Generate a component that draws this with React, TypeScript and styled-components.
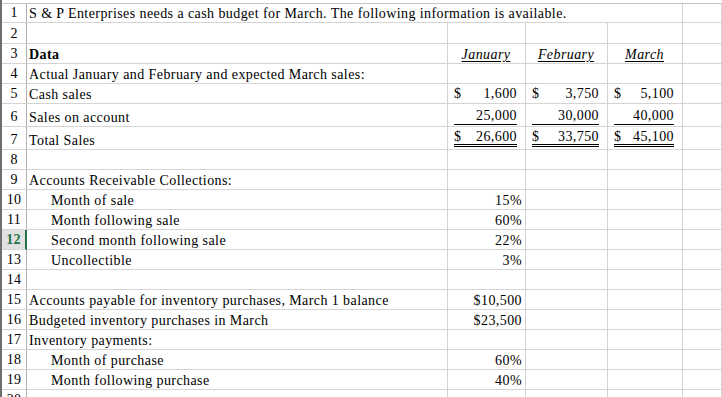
import React from 'react';
import styled, { createGlobalStyle, css } from 'styled-components';

const GlobalStyle = createGlobalStyle`
  html, body { margin: 0; padding: 0; background: #ffffff; }
  body {
    font-family: "Liberation Serif", "Times New Roman", serif;
    color: #000000;
    overflow: hidden;
  }
`;

const COLS = '25px 421px 78px 82px 75px 1fr';
const GRID = '#d4d4d4';

const Sheet = styled.div`
  width: 722px;
  height: 397px;
  overflow: hidden;
  box-sizing: border-box;
  padding-top: 3px;
  border-left: 2px solid #6f6f6f;
`;

const Grid = styled.div`
  border-top: 1px solid #c4c4c4;
`;

const Row = styled.div<{ $h: number }>`
  display: grid;
  grid-template-columns: ${COLS};
  height: ${(p) => p.$h}px;
`;

const RowHeader = styled.div<{ $active?: boolean }>`
  box-sizing: border-box;
  display: flex;
  align-items: flex-end;
  justify-content: center;
  border-right: 1px solid #b0b0b0;
  border-bottom: 1px solid ${GRID};
  font-size: 14px;
  letter-spacing: 0.2px;
  line-height: 17px;
  padding-bottom: 1px;
  color: #000;
  ${(p) =>
    p.$active &&
    css`
      background: #e1e1e1;
      color: #217346;
      font-weight: bold;
      border-right: 2px solid #217346;
    `}
`;

type Align = 'left' | 'right' | 'center';

const Cell = styled.div<{ $align?: Align; $indent?: boolean; $span?: number; $bold?: boolean }>`
  box-sizing: border-box;
  display: flex;
  align-items: flex-end;
  justify-content: ${(p) =>
    p.$align === 'right' ? 'flex-end' : p.$align === 'center' ? 'center' : 'flex-start'};
  grid-column: span ${(p) => p.$span ?? 1};
  border-right: 1px solid ${GRID};
  border-bottom: 1px solid ${GRID};
  padding: 0 3px 0 ${(p) => (p.$indent ? 24 : 2)}px;
  font-size: 14px;
  letter-spacing: 0.42px;
  line-height: 17px;
  font-weight: ${(p) => (p.$bold ? 'bold' : 'normal')};
  white-space: nowrap;
  min-width: 0;
`;

const MoneyCell = styled.div`
  box-sizing: border-box;
  display: flex;
  align-items: flex-end;
  border-right: 1px solid ${GRID};
  border-bottom: 1px solid ${GRID};
  padding: 0 8px 1px 6px;
  font-size: 14px;
  letter-spacing: 0.42px;
  white-space: nowrap;
`;

type Rule = 'none' | 'single' | 'double';

const Money = styled.span<{ $rule: Rule }>`
  flex: 1;
  display: flex;
  justify-content: space-between;
  line-height: ${(p) => (p.$rule === 'double' ? 15 : 16)}px;
  ${(p) =>
    p.$rule === 'single' &&
    css`
      border-bottom: 1px solid #000;
    `}
  ${(p) =>
    p.$rule === 'double' &&
    css`
      border-bottom: 3px double #000;
      margin-bottom: 1px;
    `}
`;

const MonthLabel = styled.span`
  font-style: italic;
  text-decoration: underline;
  text-underline-offset: 2px;
`;

type CellSpec =
  | { kind: 'text'; text?: string; align?: Align; indent?: boolean; span?: number; bold?: boolean; month?: boolean }
  | { kind: 'money'; dollar?: boolean; value: string; rule: Rule };

interface RowSpec {
  n: number;
  h: number;
  cells: CellSpec[];
  active?: boolean;
}

const t = (text?: string, opts: Partial<Extract<CellSpec, { kind: 'text' }>> = {}): CellSpec => ({
  kind: 'text',
  text,
  ...opts,
});
const blank = (): CellSpec => ({ kind: 'text' });
const m = (value: string, rule: Rule, dollar = false): CellSpec => ({ kind: 'money', value, rule, dollar });

const rows: RowSpec[] = [
  {
    n: 1,
    h: 19,
    cells: [
      t('S & P Enterprises needs a cash budget for March. The following information is available.', { span: 4 }),
      blank(),
    ],
  },
  { n: 2, h: 21, cells: [blank(), blank(), blank(), blank(), blank()] },
  {
    n: 3,
    h: 20,
    cells: [
      t('Data', { bold: true }),
      t('January', { align: 'center', month: true }),
      t('February', { align: 'center', month: true }),
      t('March', { align: 'center', month: true }),
      blank(),
    ],
  },
  { n: 4, h: 20, cells: [t('Actual January and February and expected March sales:'), blank(), blank(), blank(), blank()] },
  {
    n: 5,
    h: 20,
    cells: [t('Cash sales'), m('1,600', 'none', true), m('3,750', 'none', true), m('5,100', 'none', true), blank()],
  },
  {
    n: 6,
    h: 23,
    cells: [t('Sales on account'), m('25,000', 'single'), m('30,000', 'single'), m('40,000', 'single'), blank()],
  },
  {
    n: 7,
    h: 23,
    cells: [
      t('Total Sales'),
      m('26,600', 'double', true),
      m('33,750', 'double', true),
      m('45,100', 'double', true),
      blank(),
    ],
  },
  { n: 8, h: 20, cells: [blank(), blank(), blank(), blank(), blank()] },
  { n: 9, h: 20, cells: [t('Accounts Receivable Collections:'), blank(), blank(), blank(), blank()] },
  { n: 10, h: 20, cells: [t('Month of sale', { indent: true }), t('15%', { align: 'right' }), blank(), blank(), blank()] },
  { n: 11, h: 20, cells: [t('Month following sale', { indent: true }), t('60%', { align: 'right' }), blank(), blank(), blank()] },
  {
    n: 12,
    h: 20,
    active: true,
    cells: [t('Second month following sale', { indent: true }), t('22%', { align: 'right' }), blank(), blank(), blank()],
  },
  { n: 13, h: 20, cells: [t('Uncollectible', { indent: true }), t('3%', { align: 'right' }), blank(), blank(), blank()] },
  { n: 14, h: 20, cells: [blank(), blank(), blank(), blank(), blank()] },
  {
    n: 15,
    h: 20,
    cells: [
      t('Accounts payable for inventory purchases, March 1 balance'),
      t('$10,500', { align: 'right' }),
      blank(),
      blank(),
      blank(),
    ],
  },
  {
    n: 16,
    h: 20,
    cells: [t('Budgeted inventory purchases in March'), t('$23,500', { align: 'right' }), blank(), blank(), blank()],
  },
  { n: 17, h: 20, cells: [t('Inventory payments:'), blank(), blank(), blank(), blank()] },
  { n: 18, h: 20, cells: [t('Month of purchase', { indent: true }), t('60%', { align: 'right' }), blank(), blank(), blank()] },
  {
    n: 19,
    h: 20,
    cells: [t('Month following purchase', { indent: true }), t('40%', { align: 'right' }), blank(), blank(), blank()],
  },
  { n: 20, h: 20, cells: [blank(), blank(), blank(), blank(), blank()] },
];

function renderCell(c: CellSpec, i: number) {
  if (c.kind === 'money') {
    return (
      <MoneyCell key={i}>
        <Money $rule={c.rule}>
          <span>{c.dollar ? '$' : ''}</span>
          <span>{c.value}</span>
        </Money>
      </MoneyCell>
    );
  }
  return (
    <Cell key={i} $align={c.align} $indent={c.indent} $span={c.span} $bold={c.bold}>
      {c.month ? <MonthLabel>{c.text}</MonthLabel> : c.text}
    </Cell>
  );
}

export default function App() {
  return (
    <>
      <GlobalStyle />
      <Sheet>
        <Grid>
          {rows.map((r) => (
            <Row key={r.n} $h={r.h}>
              <RowHeader $active={r.active}>{r.n}</RowHeader>
              {r.cells.map(renderCell)}
            </Row>
          ))}
        </Grid>
      </Sheet>
    </>
  );
}
